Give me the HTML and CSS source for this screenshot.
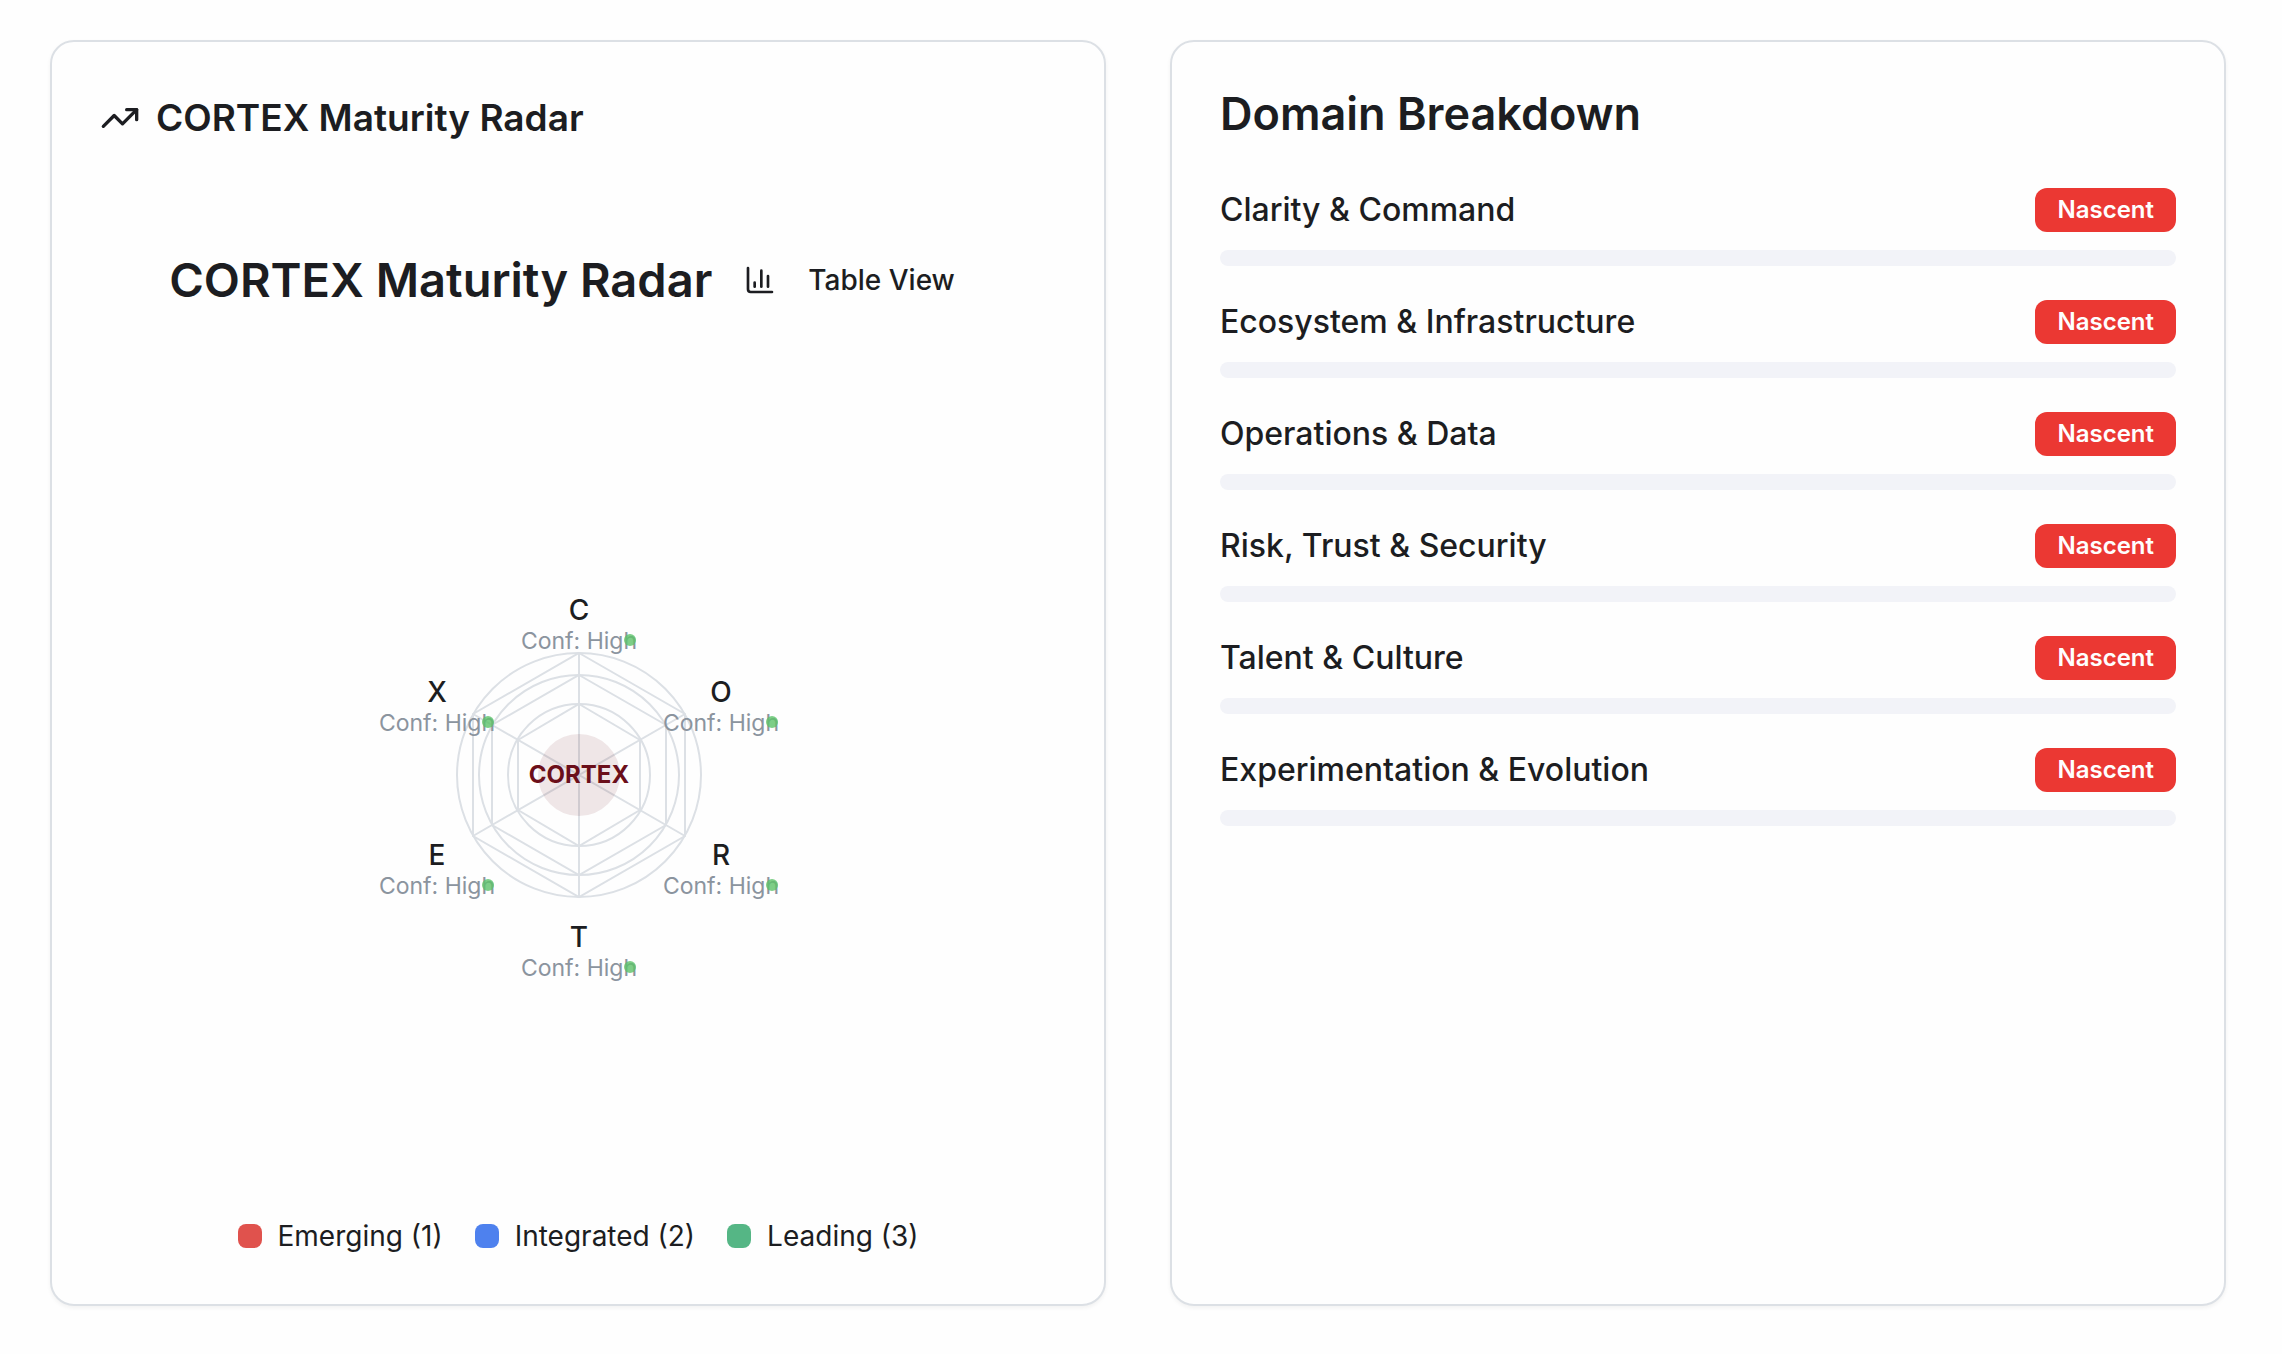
FILE: index.html
```html
<!DOCTYPE html>
<html lang="en">
<head>
<meta charset="utf-8">
<meta name="viewport" content="width=device-width, initial-scale=1">
<title>CORTEX Maturity Radar</title>
<link rel="stylesheet" href="styles.css">
</head>
<body>
<main class="dashboard">
  <section class="card radar-card">
    <h2 class="card-heading">
      <svg class="icon-trend" viewBox="0 0 24 24" aria-hidden="true"><path d="M22 7 13.5 15.5 8.5 10.5 2 17"/><path d="M16 7h6v6"/></svg>
      CORTEX Maturity Radar
    </h2>
    <div class="radar-header">
      <h3 class="radar-title">CORTEX Maturity Radar</h3>
      <button class="view-toggle" type="button">
        <svg class="icon-chart" viewBox="0 0 24 24" aria-hidden="true"><path d="M3 3v16a2 2 0 0 0 2 2h16"/><path d="M18 17V9"/><path d="M13 17V5"/><path d="M8 17v-3"/></svg>
        Table View
      </button>
    </div>
    <div class="radar-stage">
      <svg class="radar" viewBox="-241 -220 480 440" role="img" aria-label="Maturity radar with six domains">
        <g class="grid-lines">
          <circle r="71"/><circle r="100"/><circle r="122"/>
          <path d="M0-71 61-35V35L0 71-61 35V-35Z"/>
          <path d="M0-100 87-50V50L0 100-87 50V-50Z"/>
          <path d="M0-122 106-61V61L0 122-106 61V-61Z"/>
          <path d="M0-122V122M106-61-106 61M106 61-106-61"/>
        </g>
        <circle class="hub" r="41"/>
        <text class="hub-label" y="8">CORTEX</text>
        <g class="axis" transform="translate(0 -163)"><text class="letter" y="8">C</text><text class="conf" y="37">Conf: High</text><circle class="dot" cx="51" cy="28" r="6"/></g>
        <g class="axis" transform="translate(142 -81)"><text class="letter" y="8">O</text><text class="conf" y="37">Conf: High</text><circle class="dot" cx="51" cy="28" r="6"/></g>
        <g class="axis" transform="translate(142 82)"><text class="letter" y="8">R</text><text class="conf" y="37">Conf: High</text><circle class="dot" cx="51" cy="28" r="6"/></g>
        <g class="axis" transform="translate(0 164)"><text class="letter" y="8">T</text><text class="conf" y="37">Conf: High</text><circle class="dot" cx="51" cy="28" r="6"/></g>
        <g class="axis" transform="translate(-142 82)"><text class="letter" y="8">E</text><text class="conf" y="37">Conf: High</text><circle class="dot" cx="51" cy="28" r="6"/></g>
        <g class="axis" transform="translate(-142 -81)"><text class="letter" y="8">X</text><text class="conf" y="37">Conf: High</text><circle class="dot" cx="51" cy="28" r="6"/></g>
      </svg>
    </div>
    <ul class="legend">
      <li><span class="swatch emerging"></span>Emerging (1)</li>
      <li><span class="swatch integrated"></span>Integrated (2)</li>
      <li><span class="swatch leading"></span>Leading (3)</li>
    </ul>
  </section>

  <section class="card">
    <h2 class="breakdown-title">Domain Breakdown</h2>
    <ul class="domains">
      <li class="domain"><div class="domain-row"><span>Clarity &amp; Command</span><span class="badge">Nascent</span></div><div class="bar"></div></li>
      <li class="domain"><div class="domain-row"><span>Ecosystem &amp; Infrastructure</span><span class="badge">Nascent</span></div><div class="bar"></div></li>
      <li class="domain"><div class="domain-row"><span>Operations &amp; Data</span><span class="badge">Nascent</span></div><div class="bar"></div></li>
      <li class="domain"><div class="domain-row"><span>Risk, Trust &amp; Security</span><span class="badge">Nascent</span></div><div class="bar"></div></li>
      <li class="domain"><div class="domain-row"><span>Talent &amp; Culture</span><span class="badge">Nascent</span></div><div class="bar"></div></li>
      <li class="domain"><div class="domain-row"><span>Experimentation &amp; Evolution</span><span class="badge">Nascent</span></div><div class="bar"></div></li>
    </ul>
  </section>
</main>
</body>
</html>
```
FILE: styles.css
```css
* { box-sizing: border-box; }

body {
  margin: 0;
  background: #fefefe;
  color: #1c1d21;
  font-family: Inter, "Liberation Sans", sans-serif;
}

h2, h3, ul { margin: 0; padding: 0; }
ul { list-style: none; }

.dashboard {
  display: grid;
  grid-template-columns: repeat(2, minmax(0, 1fr));
  gap: 64px;
  min-height: 100vh;
  padding: 40px 56px 48px 50px;
}

.card {
  display: flex;
  flex-direction: column;
  padding: 48px;
  border: 2px solid #dce0e5;
  border-radius: 24px;
  background: #fefefe;
  box-shadow: 0 2px 4px rgba(0, 0, 0, 0.05);
}

.card-heading {
  display: flex;
  align-items: center;
  gap: 16px;
  font-size: 37px;
  font-weight: 600;
  line-height: 56px;
}

.icon-trend, .icon-chart {
  flex: none;
  fill: none;
  stroke: currentColor;
  stroke-width: 2;
  stroke-linecap: round;
  stroke-linejoin: round;
}
.icon-trend { width: 40px; height: 40px; }
.icon-chart { width: 32px; height: 32px; }

.radar-header {
  display: flex;
  align-items: center;
  justify-content: center;
  min-height: 108px;
  margin-top: 80px;
}

.radar-title {
  font-size: 47px;
  font-weight: 600;
  line-height: 56px;
}

.view-toggle {
  display: flex;
  align-items: center;
  gap: 32px;
  height: 72px;
  padding: 0 32px;
  border: 0;
  border-radius: 12px;
  background: transparent;
  color: inherit;
  font: 500 28px/40px Inter, "Liberation Sans", sans-serif;
}

.radar-stage {
  display: flex;
  flex: 1;
  align-items: center;
  justify-content: center;
}

.radar { width: 480px; height: 440px; }
.radar text { text-anchor: middle; }
.grid-lines { fill: none; stroke: #dce0e5; stroke-width: 2; }
.hub { fill: #6b0f1a; fill-opacity: 0.1; }
.hub-label { fill: #6b0f1a; font-size: 24px; font-weight: 700; }
.letter { fill: #1c1d21; font-size: 28px; font-weight: 500; }
.conf { fill: #8b949e; font-size: 23px; }
.dot { fill: #5dc269; fill-opacity: 0.8; }

.legend {
  display: flex;
  justify-content: center;
  gap: 32px;
  font-size: 28px;
  line-height: 40px;
}
.legend li { display: flex; align-items: center; gap: 16px; }
.swatch { width: 24px; height: 24px; border-radius: 8px; }
.emerging { background: #e0524d; }
.integrated { background: #4e81ee; }
.leading { background: #55b685; }

.breakdown-title {
  font-size: 45px;
  font-weight: 600;
  line-height: 48px;
}

.domains {
  display: grid;
  gap: 32px;
  margin-top: 48px;
}
.domain { display: grid; gap: 16px; }
.domain-row {
  display: flex;
  align-items: center;
  justify-content: space-between;
  font-size: 32px;
  font-weight: 500;
  line-height: 48px;
}
.badge {
  padding: 6px 22px;
  border-radius: 12px;
  background: #eb3833;
  color: #fefefe;
  font-size: 24px;
  font-weight: 600;
  line-height: 32px;
}
.bar { height: 16px; border-radius: 8px; background: #f2f3f8; }
```
